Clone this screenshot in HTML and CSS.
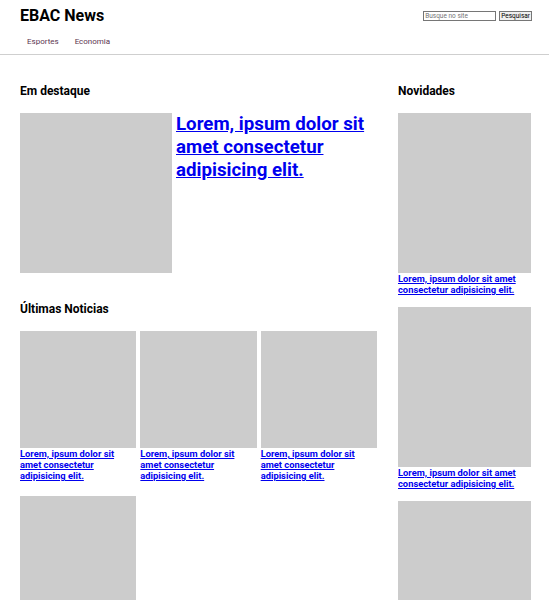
FILE: index.html
```html
<!DOCTYPE html>
<html lang="pt-BR">
<head>
<meta charset="utf-8">
<title>EBAC News</title>
<link rel="stylesheet" href="styles.css">
</head>
<body>
<header class="header">
  <div class="header-top">
    <h1 class="logo">EBAC News</h1>
    <form class="search">
      <input class="search-input" type="text" placeholder="Busque no site">
      <button class="search-btn" type="button">Pesquisar</button>
    </form>
  </div>
  <nav class="nav">
    <a class="nav-link" href="#">Esportes</a>
    <a class="nav-link" href="#">Economia</a>
  </nav>
</header>
<main class="main">
  <div class="col-left">
    <section class="featured">
      <h2 class="section-title">Em destaque</h2>
      <div class="featured-body">
        <div class="thumb featured-thumb"></div>
        <a class="featured-link" href="#">Lorem, ipsum dolor sit amet consectetur adipisicing elit.</a>
      </div>
    </section>
    <section class="latest">
      <h2 class="section-title">Últimas Noticias</h2>
      <div class="grid">
        <article class="card"><div class="thumb card-thumb"></div><a class="small-link" href="#">Lorem, ipsum dolor sit amet consectetur adipisicing elit.</a></article>
        <article class="card"><div class="thumb card-thumb"></div><a class="small-link" href="#">Lorem, ipsum dolor sit amet consectetur adipisicing elit.</a></article>
        <article class="card"><div class="thumb card-thumb"></div><a class="small-link" href="#">Lorem, ipsum dolor sit amet consectetur adipisicing elit.</a></article>
        <article class="card"><div class="thumb card-thumb"></div><a class="small-link" href="#">Lorem, ipsum dolor sit amet consectetur adipisicing elit.</a></article>
      </div>
    </section>
  </div>
  <aside class="col-right">
    <h2 class="section-title">Novidades</h2>
    <article class="side-item"><div class="thumb side-thumb"></div><a class="small-link" href="#">Lorem, ipsum dolor sit amet consectetur adipisicing elit.</a></article>
    <article class="side-item"><div class="thumb side-thumb"></div><a class="small-link" href="#">Lorem, ipsum dolor sit amet consectetur adipisicing elit.</a></article>
    <article class="side-item"><div class="thumb side-thumb"></div><a class="small-link" href="#">Lorem, ipsum dolor sit amet consectetur adipisicing elit.</a></article>
  </aside>
</main>
</body>
</html>
```

FILE: styles.css
```css
* { box-sizing: border-box; }
body {
  margin: 0;
  font-family: Roboto, "Liberation Sans", sans-serif;
  background: #fff;
  color: #000;
}
.header {
  border-bottom: 1px solid #cfcfcf;
  padding: 6px 17px 4px 20px;
}
.header-top {
  display: flex;
  justify-content: space-between;
  align-items: center;
}
.logo {
  margin: 0;
  font-size: 16px;
  font-weight: 700;
  line-height: 20px;
}
.search {
  display: flex;
  gap: 3px;
  align-items: center;
}
.search-input {
  width: 73px;
  height: 10px;
  padding: 0 1px;
  border: 1px solid #767676;
  font-family: Roboto, "Liberation Sans", sans-serif;
  font-size: 6.5px;
  color: #333;
}
.search-input::placeholder { color: #757575; }
.search-btn {
  height: 10px;
  padding: 0 1px;
  border: 1px solid #767676;
  background: #efefef;
  font-family: Roboto, "Liberation Sans", sans-serif;
  font-size: 6.5px;
  line-height: 8px;
  color: #000;
}
.nav {
  display: flex;
  gap: 16px;
  padding: 11px 7px 4px;
}
.nav-link {
  font-size: 8px;
  color: #5c3550;
  text-decoration: none;
}
.main {
  display: flex;
  gap: 21px;
  padding: 29px 18px 0 20px;
}
.col-left { width: 357px; }
.col-right { width: 133px; }
.section-title {
  margin: 0 0 15px;
  font-size: 12px;
  font-weight: 700;
  line-height: 14px;
}
.thumb { background: #cccccc; }
.featured { margin-bottom: 29px; }
.featured-body {
  display: flex;
  gap: 4px;
  align-items: flex-start;
}
.featured-thumb {
  width: 152px;
  height: 160px;
  flex: none;
}
.featured-link {
  font-size: 18.7px;
  font-weight: 700;
  line-height: 23px;
  color: #0000ee;
}
.grid {
  display: grid;
  grid-template-columns: repeat(3, 1fr);
  gap: 15px 4px;
}
.card-thumb { height: 117px; }
.small-link {
  display: block;
  font-size: 9.35px;
  font-weight: 700;
  line-height: 11px;
  color: #0000ee;
}
.side-item { margin-bottom: 12px; }
.side-thumb { height: 160px; }
```
